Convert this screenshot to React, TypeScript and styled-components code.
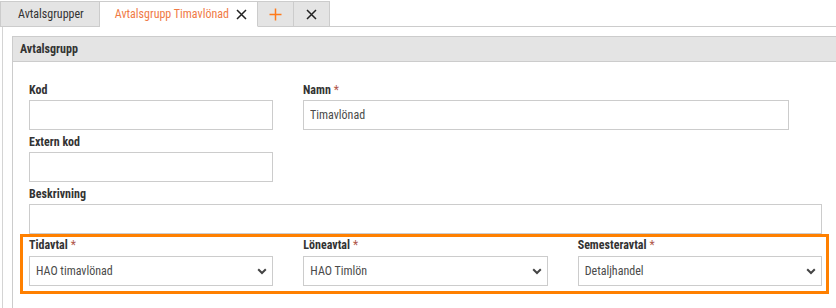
import React from 'react';
import styled, { createGlobalStyle } from 'styled-components';

const GlobalStyle = createGlobalStyle`
  html, body { margin: 0; padding: 0; background: #ffffff; }
  body {
    font-family: "Roboto Condensed", "Liberation Sans", sans-serif;
    font-size: 12px;
    color: #333333;
    overflow: hidden;
  }
  * { box-sizing: border-box; }
`;

const Page = styled.div`
  width: 836px;
  height: 308px;
  display: flex;
  flex-direction: column;
  padding-top: 1px;
`;

const TabBar = styled.div`
  display: flex;
  height: 26px;
`;

const Tab = styled.div<{ $active?: boolean; $first?: boolean; $w?: number }>`
  display: flex;
  align-items: center;
  justify-content: ${(p) => (p.$w ? 'center' : 'flex-start')};
  gap: 7px;
  height: 26px;
  ${(p) => (p.$w ? `width: ${p.$w}px;` : '')}
  padding: ${(p) => (p.$w ? '0' : p.$active ? '0 10px 0 15px' : '0 15px 0 17px')};
  background: ${(p) => (p.$active ? '#ffffff' : '#e4e4e4')};
  border-top: 1px solid #cccccc;
  border-right: 1px solid #cccccc;
  border-left: ${(p) => (p.$first ? '1px solid #cccccc' : 'none')};
  border-bottom: ${(p) => (p.$active ? '1px solid #ffffff' : '1px solid #cccccc')};
  color: ${(p) => (p.$active ? '#f07a45' : '#333333')};
  line-height: 16px;
  white-space: nowrap;
`;

const TabFiller = styled.div`
  flex: 1;
  border-bottom: 1px solid #cccccc;
`;

const Content = styled.div`
  flex: 1;
  margin-left: 2px;
  border-left: 1px solid #d4d4d4;
  padding: 9px 0 0 9px;
  display: flex;
`;

const Panel = styled.div`
  flex: 1;
  border-left: 1px solid #cccccc;
  display: flex;
  flex-direction: column;
`;

const PanelHeader = styled.div`
  height: 26px;
  background: #e4e4e4;
  border-top: 1px solid #cccccc;
  border-bottom: 1px solid #cccccc;
  padding-left: 7px;
  display: flex;
  align-items: center;
  font-weight: 700;
  color: #333333;
`;

const Form = styled.div<{ $top?: number }>`
  padding: ${(p) => p.$top ?? 20}px 14px 0 16px;
  display: flex;
  flex-direction: column;
  gap: 4px;
`;

const Row = styled.div<{ $cols: string }>`
  display: grid;
  grid-template-columns: ${(p) => p.$cols};
  column-gap: 30px;
`;

const Field = styled.div`
  display: flex;
  flex-direction: column;
`;

const Label = styled.div<{ $gap?: number }>`
  font-weight: 700;
  line-height: 16px;
  height: 16px;
  margin-bottom: ${(p) => p.$gap ?? 2}px;
  color: #333333;
  white-space: nowrap;
`;

const Required = styled.span`
  color: #b0574a;
  font-weight: 400;
  margin-left: 3px;
`;

const TextInput = styled.input`
  height: 30px;
  width: 100%;
  border: 1px solid #cccccc;
  background: #ffffff;
  padding: 0 6px;
  font-family: "Roboto Condensed", "Liberation Sans", sans-serif;
  font-size: 12px;
  color: #4a4a4a;
  outline: none;
  margin: 0;
`;

const SelectBox = styled.div`
  height: 30px;
  border: 1px solid #cccccc;
  background: #ffffff;
  padding: 0 5px 0 6px;
  display: flex;
  align-items: center;
  justify-content: space-between;
  color: #4a4a4a;
`;

const Highlight = styled.div`
  margin: 0 -7px 0 -9px;
  border: 3px solid #ff8000;
  padding: 0 4px 5px 6px;
`;

const Chevron = () => (
  <svg width="10" height="7" viewBox="0 0 10 7">
    <polyline points="1.2,1.3 5,5 8.8,1.3" fill="none" stroke="#444" strokeWidth="2" />
  </svg>
);

const CloseIcon = ({ color = '#222' }: { color?: string }) => (
  <svg width="11" height="11" viewBox="0 0 11 11">
    <path d="M1 1 L10 10 M10 1 L1 10" stroke={color} strokeWidth="1.5" />
  </svg>
);

const PlusIcon = () => (
  <svg width="13" height="13" viewBox="0 0 13 13">
    <path d="M6.5 0.5 V12.5 M0.5 6.5 H12.5" stroke="#ff7a1a" strokeWidth="1.5" />
  </svg>
);

const Select = ({ value }: { value: string }) => (
  <SelectBox>
    <span>{value}</span>
    <Chevron />
  </SelectBox>
);

export default function App() {
  return (
    <>
      <GlobalStyle />
      <Page>
        <TabBar>
          <Tab $first>Avtalsgrupper</Tab>
          <Tab $active>
            Avtalsgrupp Timavlönad
            <CloseIcon />
          </Tab>
          <Tab $w={36}>
            <PlusIcon />
          </Tab>
          <Tab $w={36}>
            <CloseIcon />
          </Tab>
          <TabFiller />
        </TabBar>
        <Content>
          <Panel>
            <PanelHeader>Avtalsgrupp</PanelHeader>
            <Form>
              <Row $cols="244px 486px">
                <Field>
                  <Label>Kod</Label>
                  <TextInput readOnly value="" />
                </Field>
                <Field>
                  <Label>
                    Namn<Required>*</Required>
                  </Label>
                  <TextInput readOnly value="Timavlönad" />
                </Field>
              </Row>
              <Row $cols="244px">
                <Field>
                  <Label>Extern kod</Label>
                  <TextInput readOnly value="" />
                </Field>
              </Row>
              <Row $cols="1fr">
                <Field>
                  <Label>Beskrivning</Label>
                  <TextInput readOnly value="" />
                </Field>
              </Row>
            </Form>
            <Form $top={0}>
              <Highlight>
                <Row $cols="1fr 1fr 1fr">
                  <Field>
                    <Label $gap={3}>
                      Tidavtal<Required>*</Required>
                    </Label>
                    <Select value="HAO timavlönad" />
                  </Field>
                  <Field>
                    <Label $gap={3}>
                      Löneavtal<Required>*</Required>
                    </Label>
                    <Select value="HAO Timlön" />
                  </Field>
                  <Field>
                    <Label $gap={3}>
                      Semesteravtal<Required>*</Required>
                    </Label>
                    <Select value="Detaljhandel" />
                  </Field>
                </Row>
              </Highlight>
            </Form>
          </Panel>
        </Content>
      </Page>
    </>
  );
}
